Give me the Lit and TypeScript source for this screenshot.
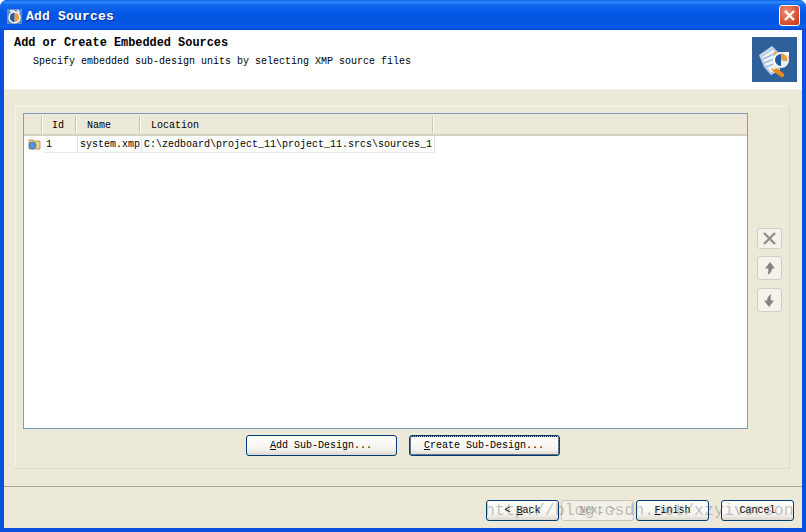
import { LitElement, html, css } from "lit";
import { customElement } from "lit/decorators.js";

@customElement("app-root")
export class AppRoot extends LitElement {
  static styles = css`
    :host { display: block; width: 806px; height: 532px; background: #fff; overflow: hidden; }
    * { box-sizing: border-box; }
    .win {
      position: relative; width: 806px; height: 532px; display: flex; flex-direction: column;
      padding: 0 4px 4px 4px; background: #0a50dc; border-radius: 7px 7px 0 0; overflow: hidden;
      font: 10px/12px "Liberation Mono", "DejaVu Sans Mono", monospace; color: #000;
    }
    .title {
      margin: 0 -4px; padding: 0 6px 0 7px; height: 30px; flex: none; display: flex; align-items: center; gap: 4px;
      background: linear-gradient(180deg, #0a5be8 0, #2f8cf8 2px, #1068f0 5px, #0559e6 12px, #0454e0 22px, #0a5eea 27px, #0449cf 30px);
    }
    .title-icon { width: 15px; height: 15px; flex: none; margin-top: 2px; }
    .title-text { color: #fff; font: bold 13px/14px "Liberation Mono", monospace; letter-spacing: .2px; text-shadow: 1px 1px 0 #0a2f90; padding-top: 4px; }
    .close {
      margin-left: auto; width: 21px; height: 21px; border: 1px solid #fff; border-radius: 3px;
      background: radial-gradient(circle at 35% 30%, #ee9078, #d9532c 60%, #b83a18); display: flex; align-items: center; justify-content: center;
    }
    .body { flex: 1; display: flex; flex-direction: column; background: #ece9d8; min-height: 0; }
    .head { height: 60px; flex: none; background: #fff; border-bottom: 1px solid #f3f1e6; display: flex; }
    .head-text { flex: 1; padding: 7px 0 0 10px; }
    .head-title { font: bold 11.9px/12px "Liberation Mono", monospace; color: #000; }
    .head-sub { margin: 7px 0 0 19px; white-space: pre; }
    .logo { width: 45px; height: 45px; margin: 7px 5px 0 0; flex: none; display: block; }
    .mid { flex: 1; padding: 17px 13px 18px 12px; min-height: 0; display: flex; }
    .panel {
      flex: 1; display: flex; flex-direction: column; padding: 6px 0 0 7px; background: #ece9d8;
      box-shadow: -1px -1px 0 #f5f3ea, 1px 1px 0 #dcd8c4, 0 0 0 1px #e0dccb;
    }
    .panel-top { flex: 1; display: flex; min-height: 0; }
    .table { flex: 1; min-width: 0; background: #fff; border: 1px solid #7f9db9; display: flex; flex-direction: column; }
    .thead { display: flex; height: 22px; flex: none; background: #ece9d8; border-bottom: 2px solid #d6d2c0; }
    .th { padding: 4px 0 0 9px; border-right: 1px solid #c9c5b2; box-shadow: 1px 0 0 #fff; height: 17px; margin-top: 2px; }
    .c0 { width: 18px; padding: 0; }
    .c1 { width: 34px; padding-left: 10px; }
    .c2 { width: 64px; padding-left: 11px; }
    .c3 { width: 293px; padding-left: 11px; }
    .tr { display: flex; height: 17px; flex: none; }
    .td { border-right: 1px solid #e6e4d8; border-bottom: 1px solid #eeede4; padding: 3px 0 0 3px; white-space: nowrap; overflow: hidden; }
    .d0 { width: 19px; padding: 2px 0 0 4px; border: 0; }
    .d1 { width: 35px; }
    .d2 { width: 64px; padding-left: 2px; }
    .d3 { width: 293px; padding-left: 2px; }
    .folder { width: 13px; height: 12px; display: block; }
    .side { width: 41px; flex: none; display: flex; flex-direction: column; justify-content: center; align-items: center; gap: 8px; padding: 0 0 2px 1px; }
    .sbtn { width: 25px; height: 24px; border: 1px solid #d2cfc0; border-radius: 3px; background: #f4f2ea; display: flex; align-items: center; justify-content: center; }
    .sbtn.x { height: 21px; margin-bottom: -1px; }
    .panel-btns { height: 39px; flex: none; display: flex; justify-content: center; gap: 12px; padding: 6px 7px 0 0; }
    .btn {
      height: 21px; border: 1px solid #003c74; border-radius: 3px; background: linear-gradient(180deg, #fff, #f4f3ee 70%, #dcd8ce);
      display: flex; align-items: center; justify-content: center; white-space: pre; padding-top: 1px;
    }
    .big { width: 151px; }
    .focus { box-shadow: inset 0 0 0 1px #a8c4ee; outline: 1px dotted #222; outline-offset: -2px; }
    .foot { height: 42px; flex: none; border-top: 1px solid #aca899; display: flex; justify-content: flex-end; padding: 13px 8px 0 0; }
    .nav { width: 73px; margin-left: 2px; }
    .nav.cancel { margin-left: 12px; }
    .nav.off { border-color: #c9c7ba; background: #f2f0e7; color: #a8a698; }
    u { text-underline-offset: 1px; }
    .mark {
      position: absolute; left: 485px; top: 499px; font: 16.6px/24px "Liberation Mono", monospace;
      color: rgba(100, 100, 100, .38); white-space: nowrap; pointer-events: none;
    }
  `;

  render() {
    return html`
      <div class="win">
        <div class="title">
          <svg class="title-icon" viewBox="0 0 16 16">
            <rect width="16" height="16" fill="#5f8fc4" />
            <circle cx="8" cy="9" r="6.5" fill="#fff" />
            <path d="M8 4a5 5 0 0 1 0 10z" fill="#e8a040" />
            <path d="M8 4a5 5 0 0 0 0 10z" fill="#2a5aa0" />
            <path d="M3 2h5M11 1l2 3" stroke="#fff" stroke-width="1.6" fill="none" />
          </svg>
          <span class="title-text">Add Sources</span>
          <div class="close">
            <svg width="13" height="13" viewBox="0 0 13 13"><path d="M2 2l9 9M11 2l-9 9" stroke="#fff" stroke-width="2.4" /></svg>
          </div>
        </div>
        <div class="body">
          <div class="head">
            <div class="head-text">
              <div class="head-title">Add or Create Embedded Sources</div>
              <div class="head-sub">Specify embedded sub-design units by selecting XMP source files</div>
            </div>
            <svg class="logo" viewBox="0 0 45 45">
              <rect width="45" height="45" fill="#30609a" />
              <path d="M7 18l13-9 6 6 2 18-9 5-7-8z" fill="#c9d8ea" />
              <path d="M9 20l12-8 5 5 1 15-8 4-6-7z" fill="#eaf0f7" stroke="#9fb5cf" stroke-width=".8" />
              <path d="M11 22l11-5M12 26l10-4M14 30l7-3" stroke="#8ea8c8" stroke-width="1.2" />
              <rect x="22" y="15" width="15" height="6" fill="#e2a264" />
              <path d="M31 15l6 0 0 5z" fill="#f4f6fa" />
              <circle cx="29" cy="23" r="7" fill="#1f5a9a" stroke="#f2f5fa" stroke-width="2" />
              <path d="M29 16.5a6.5 6.5 0 0 1 6.4 7.5L29 23z" fill="#e9a040" />
              <path d="M35.4 24a6.5 6.5 0 0 1-6.4 5.5V23z" fill="#e8eef6" />
              <path d="M22 32l8 6" stroke="#ee8a1c" stroke-width="4.4" stroke-linecap="round" />
              <path d="M21 29l2 3" stroke="#f6ecd8" stroke-width="3.4" />
            </svg>
          </div>
          <div class="mid">
            <div class="panel">
              <div class="panel-top">
                <div class="table">
                  <div class="thead">
                    <div class="th c0"></div>
                    <div class="th c1">Id</div>
                    <div class="th c2">Name</div>
                    <div class="th c3">Location</div>
                  </div>
                  <div class="tr">
                    <div class="td d0">
                      <svg class="folder" viewBox="0 0 13 12">
                        <path d="M1 2h4l1 1h6v8H1z" fill="#f2d27a" stroke="#a08a50" stroke-width=".8" />
                        <circle cx="4.5" cy="7.500" r="3.500" fill="#5a94d8" stroke="#34689e" stroke-width=".7" />
                      </svg>
                    </div>
                    <div class="td d1">1</div>
                    <div class="td d2">system.xmp</div>
                    <div class="td d3">C:\\zedboard\\project_11\\project_11.srcs\\sources_1</div>
                  </div>
                </div>
                <div class="side">
                  <div class="sbtn x">
                    <svg width="15" height="15" viewBox="0 0 15 15"><path d="M2 2l11 11M13 2L2 13" stroke="#8f8f8a" stroke-width="2.4" /></svg>
                  </div>
                  <div class="sbtn">
                    <svg width="13" height="15" viewBox="0 0 13 15"><path d="M7 1l5 6.500H9c0 3-1.500 5-4.500 6.500 1-2.500 1-4.500 .5-6.500H2z" fill="#85857f" /></svg>
                  </div>
                  <div class="sbtn">
                    <svg width="13" height="15" viewBox="0 0 13 15"><path d="M6 14L1 7.500h3c0-3 1.500-5 4.500-6.500-1 2.500-1 4.500-.5 6.500h3z" fill="#85857f" /></svg>
                  </div>
                </div>
              </div>
              <div class="panel-btns">
                <div class="btn big"><span><u>A</u>dd Sub-Design...</span></div>
                <div class="btn big focus"><span><u>C</u>reate Sub-Design...</span></div>
              </div>
            </div>
          </div>
          <div class="foot">
            <div class="btn nav"><span>&lt; <u>B</u>ack</span></div>
            <div class="btn nav off"><span><u>N</u>ext &gt;</span></div>
            <div class="btn nav"><span><u>F</u>inish</span></div>
            <div class="btn nav cancel"><span>Cancel</span></div>
          </div>
        </div>
        <div class="mark">http://blog.csdn.net/xzyiverson</div>
      </div>
    `;
  }
}
